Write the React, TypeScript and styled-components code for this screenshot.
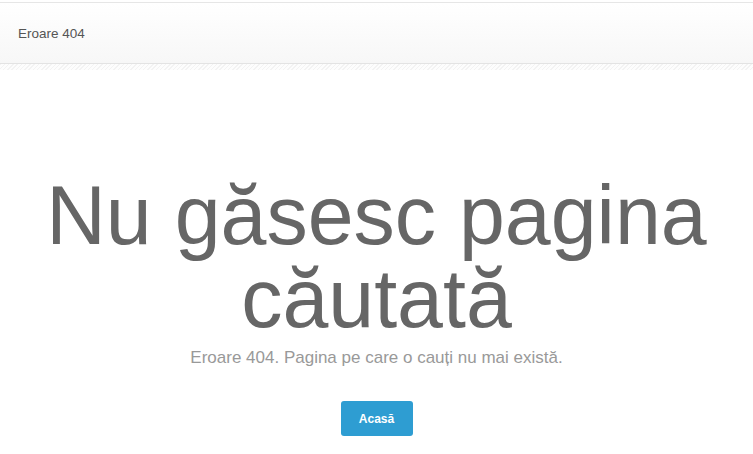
import React from "react";
import styled, { createGlobalStyle } from "styled-components";

const Global = createGlobalStyle`
  html, body { margin: 0; padding: 0; background: #fff; }
  body { font-family: Arial, "Liberation Sans", sans-serif; }
`;

const Page = styled.div`
  width: 753px;
  min-height: 454px;
  padding-top: 2px;
  box-sizing: border-box;
`;

const Header = styled.header`
  height: 60px;
  border-top: 1px solid #e6e6e6;
  border-bottom: 1px solid #e3e3e3;
  background: linear-gradient(#ffffff, #f7f7f7);
  display: flex;
  align-items: center;
  padding-left: 18px;
  font-size: 13.5px;
  color: #555;
`;

const Hatch = styled.div`
  height: 6px;
  background: repeating-linear-gradient(
    135deg,
    #f3f3f3 0px,
    #f3f3f3 1px,
    #fdfdfd 1px,
    #fdfdfd 3px
  );
`;

const Main = styled.main`
  display: flex;
  flex-direction: column;
  align-items: center;
  padding-top: 104px;
`;

const Title = styled.h1`
  margin: 0;
  font-weight: 400;
  font-size: 82.5px;
  line-height: 83px;
  color: #666;
  text-align: center;
  width: 720px;
`;

const Subtitle = styled.p`
  margin: 8px 0 0;
  font-size: 17px;
  line-height: 20px;
  color: #999;
`;

const Button = styled.a`
  margin-top: 33px;
  display: inline-flex;
  align-items: center;
  justify-content: center;
  width: 72px;
  height: 35px;
  border-radius: 3px;
  background: #2e9dd2;
  color: #fff;
  font-weight: 700;
  font-size: 12px;
  text-decoration: none;
`;

export default function App() {
  return (
    <Page>
      <Global />
      <Header>Eroare 404</Header>
      <Hatch />
      <Main>
        <Title>Nu găsesc pagina căutată</Title>
        <Subtitle>Eroare 404. Pagina pe care o cauți nu mai există.</Subtitle>
        <Button href="#">Acasă</Button>
      </Main>
    </Page>
  );
}
